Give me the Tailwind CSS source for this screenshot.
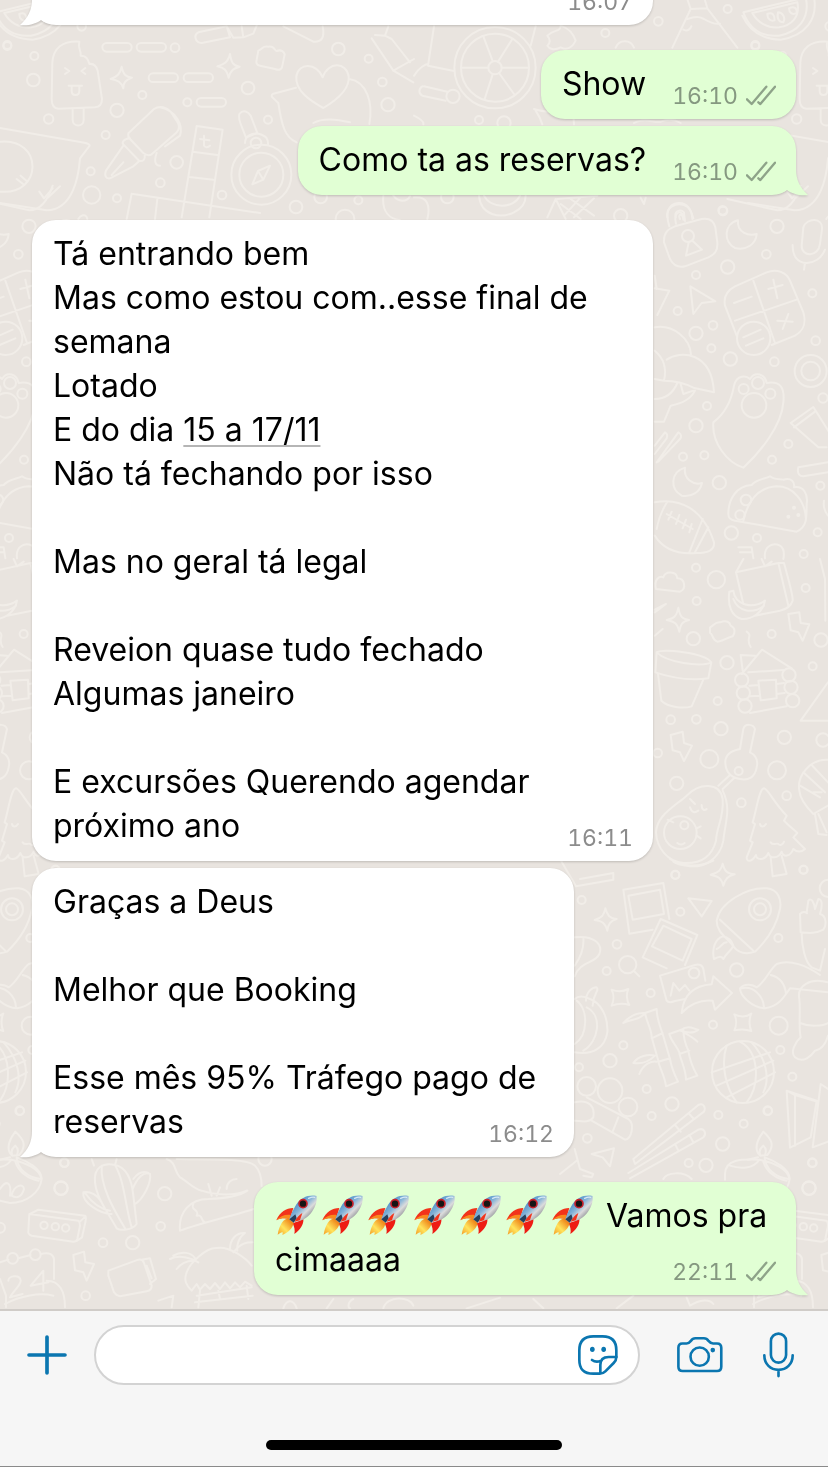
<!DOCTYPE html>
<html lang="pt-BR">
  <head>
    <meta charset="UTF-8" />
    <meta name="viewport" content="width=device-width, initial-scale=1.0" />
    <script src="https://cdn.jsdelivr.net/npm/@tailwindcss/browser@4"></script>
    <title>Conversa</title>
  </head>
  <body
    class="flex h-screen flex-col bg-[#e9e4df] font-['Inter','Liberation_Sans',sans-serif] text-black"
  >
    <!-- shared shapes -->
    <svg class="absolute size-0" aria-hidden="true">
      <defs>
        <linearGradient id="hull" x1="0" y1="0" x2="1" y2="1">
          <stop offset="0.2" stop-color="#3f86c4" />
          <stop offset="0.45" stop-color="#86b4d8" />
          <stop offset="0.6" stop-color="#dcdcdc" />
          <stop offset="0.85" stop-color="#6c7076" />
        </linearGradient>
        <linearGradient id="flame" x1="1" y1="0" x2="0" y2="1">
          <stop offset="0.2" stop-color="#f08a1c" />
          <stop offset="0.6" stop-color="#ffe45c" />
          <stop offset="1" stop-color="#f59a23" />
        </linearGradient>
      </defs>
      <symbol id="rocket" viewBox="75 69 138 132">
        <path d="M130 111C108 112 90 122 79 148C92 141 104 141 120 144Z" fill="#f2331b" />
        <path d="M79 148C92 141 104 141 120 144L122 132C104 130 90 136 79 148Z" fill="#f98a1e" />
        <path d="M128 156L160 144C162 160 150 178 133 189C136 178 133 168 128 156Z" fill="#ee1c14" />
        <path d="M118 142C100 142 88 162 83 191C90 187 94 183 98 184C98 188 98 190 97 192C115 184 128 172 131 155Z" fill="url(#flame)" />
        <path d="M200 75C176 70 152 80 138 102C128 118 122 132 118 145L131 155C152 150 173 142 186 122C197 106 202 90 200 75Z" fill="url(#hull)" />
        <path d="M118 145L131 155L140 142L136 130Z" fill="#26405c" />
        <path d="M134 152C140 140 146 133 157 126L150 148Z" fill="#f2331b" />
        <circle cx="159" cy="98" r="12" fill="#151515" stroke="#c8202a" stroke-width="5" />
        <path d="M176 82C182 79 188 77 194 79" fill="none" stroke="#d6e8f6" stroke-width="4" stroke-linecap="round" />
      </symbol>
      <symbol id="ticks" viewBox="0 0 90 66">
        <path d="M3 43L17 57L61 5M37 52L43 57L87 5" fill="none" stroke="#8ea389" stroke-width="7" stroke-linecap="round" stroke-linejoin="round" />
      </symbol>
      <symbol id="tail" viewBox="0 0 36 27">
        <path d="M12 0C12 11 8 19 0 26C8 27 16 25 21 21C25 24 30 25 36 25V0Z" fill="currentColor" />
      </symbol>
    </svg>

    <main class="relative flex min-h-0 flex-1 flex-col justify-end overflow-hidden px-8 pb-3.5">
      <!-- wallpaper doodles, one tile repeated sideways -->
      <svg
        class="absolute inset-0 h-full w-full"
        viewBox="0 0 2484 3930"
        preserveAspectRatio="xMidYMax slice"
        fill="none"
        stroke="#f1ede8"
        stroke-width="6"
        stroke-linecap="round"
        stroke-linejoin="round"
        aria-hidden="true"
      >
        <g id="tile">
          <g>
            <!-- lolly -->
            <path d="M155 300L157 190C160 150 185 125 238 128C232 150 245 155 242 170C262 170 265 185 268 195C285 192 290 205 293 215L306 300C306 318 296 324 285 325L175 329C160 328 155 318 155 300ZM218 330V362C218 385 251 385 251 362V328M195 207L208 216L195 225M256 207L244 216L256 225M206 260H246M215 262V275C215 292 238 292 238 275V262" />
            <!-- speech with face -->
            <path d="M0 387L245 430C270 434 272 438 266 444L240 478C236 530 220 632 140 634L0 612M0 428C130 415 130 590 0 578M50 540L70 556M62 530L80 546M118 578L132 598L158 568M145 595L180 562" />
            <!-- dashes -->
            <rect x="307" y="132" width="88" height="26" rx="13" />
            <rect x="410" y="132" width="88" height="26" rx="13" />
            <rect x="446" y="223" width="88" height="26" rx="13" />
            <rect x="551" y="223" width="88" height="26" rx="13" />
            <rect x="590" y="297" width="88" height="26" rx="13" />
            <path d="M595 100L680 82L690 115L605 132C585 130 580 108 595 100ZM680 82L700 116L730 115L725 82M730 115L760 104L770 80" />
            <path d="M365 203C370 228 378 234 396 236C376 244 370 250 370 268C364 250 354 243 332 240C352 232 360 226 365 203ZM690 165C694 192 700 200 719 203C700 208 692 214 686 236C680 212 672 206 652 202C672 196 684 190 690 165Z" />
            <path d="M775 155C790 150 785 140 805 143C825 140 822 155 830 156C845 150 852 160 854 166L846 205C842 215 835 214 825 210L780 200C768 198 768 190 770 182Z" />
            <!-- tube of paint -->
            <path d="M385 403L462 330C480 318 500 325 512 338L534 372C540 385 536 395 528 402L455 466C445 472 435 466 430 462L390 420C384 414 384 408 385 403ZM390 418C370 420 365 430 370 436L418 486C430 488 436 480 434 470M370 440L318 515C312 530 318 540 330 538L400 502L418 486M335 528L370 490M480 325C530 335 550 380 540 410L495 442M470 462C460 490 468 500 480 500" />
            <!-- tetris bricks -->
            <path d="M590 381L668 392L628 655M590 381L545 655M578 458L652 468M568 534L640 542M395 584L380 660M395 584L780 642M472 600L465 660M612 410V440C615 446 625 446 630 440M600 420L628 424" />
            <!-- compass -->
            <path d="M718 345C730 330 745 338 752 350L772 402C752 410 742 414 738 416L722 375C716 360 716 355 718 345Z" />
            <path d="M735 432C735 410 755 402 775 404C800 410 805 420 804 438" />
            <circle cx="768" cy="432" r="16" />
            <circle cx="784" cy="527" r="90" />
            <circle cx="784" cy="527" r="66" />
            <path d="M810 500L790 542L757 556L774 516ZM774 516L790 542" />
            <!-- heart and speech -->
            <path d="M968 235C950 190 895 190 889 232C885 275 930 305 970 327C1015 300 1050 270 1046 232C1040 190 985 185 968 235ZM888 266L820 284C812 288 815 294 820 298L835 312C845 380 855 415 890 430M1048 240C1100 248 1120 310 1108 375M940 372C970 355 1010 360 1050 370" />
            <path d="M850 82L940 128C965 130 975 115 968 82M1115 118L1180 215L1240 250M1125 108L1155 110L1165 82M1180 215L1242 180M1155 110L1175 120L1230 190" />
            <circle cx="22" cy="141" r="12" /><circle cx="103" cy="171" r="12" /><circle cx="100" cy="243" r="19" />
            <circle cx="245" cy="82" r="13" /><circle cx="525" cy="146" r="13" /><circle cx="427" cy="288" r="12" />
            <circle cx="351" cy="334" r="20" /><circle cx="146" cy="360" r="14" /><circle cx="317" cy="408" r="12" />
            <circle cx="272" cy="517" r="12" /><circle cx="275" cy="588" r="26" /><circle cx="351" cy="598" r="12" />
            <circle cx="481" cy="551" r="13" /><circle cx="530" cy="490" r="19" /><circle cx="562" cy="310" r="12" />
            <circle cx="744" cy="267" r="19" /><circle cx="804" cy="362" r="12" /><circle cx="666" cy="588" r="13" />
            <circle cx="1015" cy="150" r="19" /><circle cx="1106" cy="179" r="12" /><circle cx="1147" cy="249" r="13" />
            <circle cx="1164" cy="317" r="20" /><circle cx="888" cy="624" r="19" /><circle cx="962" cy="594" r="19" />
            <circle cx="1075" cy="604" r="12" /><circle cx="1035" cy="660" r="28" />
            <path d="M1150 590C1145 640 1170 660 1200 664M1180 590C1195 610 1220 610 1230 592M262 660C258 640 240 650 235 660" />
          </g>

          <g transform="translate(1242 0)">
            <!-- wheel -->
            <circle cx="243" cy="206" r="122" />
            <circle cx="243" cy="206" r="102" />
            <circle cx="243" cy="206" r="20" />
            <path d="M223 206H142M263 206H343M236 186L208 112M252 188L295 120M236 226L212 300M255 222L300 285" />
            <path d="M60 82L42 200L120 216M0 230C15 205 35 195 42 195M25 262C12 270 15 285 25 290L95 305M30 262L100 278M365 82L350 140" />
            <circle cx="117" cy="292" r="20" />
            <path d="M400 110C420 90 440 100 440 80C470 90 480 110 485 125C470 155 450 150 440 145C420 155 405 150 400 140C412 130 408 120 400 110ZM605 146C615 120 650 120 660 146" />
            <!-- mountain flag -->
            <path d="M775 146L830 30L880 28L970 146M830 30L820 0M880 28L872 0M820 60C850 50 860 55 870 60C890 72 905 76 918 74M808 92C820 98 830 90 832 82" />
            <!-- watermelon -->
            <path d="M988 40L1175 -5C1190 60 1150 100 1095 110C1040 115 1005 85 988 40ZM1015 42L1150 10C1160 55 1130 80 1095 85C1060 88 1030 70 1015 42ZM1200 -5C1212 60 1175 110 1100 122C1040 120 1005 95 985 50" />
            <path d="M1060 45C1060 60 1070 68 1082 64C1082 48 1075 38 1060 45ZM1092 40C1088 60 1095 70 1108 70C1116 55 1105 40 1092 40ZM1125 28C1125 40 1135 50 1148 42C1150 28 1140 20 1125 28Z" />
            <!-- row under the green bubbles -->
            <path d="M195 590C200 650 260 660 300 640C330 625 335 605 335 590M210 590C230 630 300 630 318 590M400 655L425 600L455 660M430 600L550 590M440 615L500 660M470 600L540 650M500 595L450 650M540 598L480 655M680 596L690 615L695 596" />
            <path d="M760 655C755 625 785 610 810 618C830 625 835 640 835 660M785 655C780 635 800 630 810 640L812 660M0 350C20 360 30 370 28 376M360 330C400 345 420 330 478 345L480 376M365 335C375 350 380 360 385 376M660 372C690 355 720 372 740 368C760 360 780 360 800 372M0 595C40 590 50 620 40 660" />
            <path d="M940 600L1090 634C1130 634 1150 590 1160 560" />
            <circle cx="733" cy="67" r="13" /><circle cx="941" cy="30" r="12" /><circle cx="574" cy="102" r="12" />
            <circle cx="195" cy="363" r="12" /><circle cx="100" cy="594" r="19" /><circle cx="620" cy="650" r="20" />
            <circle cx="927" cy="636" r="13" /><circle cx="1024" cy="138" r="12" /><circle cx="270" cy="372" r="20" />
          </g>

          <g transform="translate(1920 600)">
            <!-- padlock -->
            <path d="M72 130C70 100 85 90 105 82L185 60C210 56 222 68 226 85L232 130C234 155 225 165 205 175L135 202C110 208 98 195 90 180ZM88 82C75 40 85 15 115 12C145 10 152 35 160 58M108 74C98 35 130 25 135 66M120 60C112 45 128 40 130 62" />
            <circle cx="144" cy="111" r="18" />
            <path d="M146 130L138 170L186 152L158 126" />
            <!-- moon -->
            <path d="M294 64C250 75 250 130 285 147C320 155 348 135 350 105C325 112 290 100 294 64Z" />
            <!-- mic -->
            <path d="M485 140L490 85C500 55 550 55 546 90L540 135C535 175 485 175 485 140ZM458 138C455 210 535 205 555 152M495 192L492 212" />
            <!-- calculator -->
            <path d="M255 320C250 295 260 275 285 262L380 220C410 208 440 220 450 245L490 340C500 375 490 395 465 410L395 438M255 320L290 410M340 245L405 432M285 365L470 302M282 312L335 293M385 270L428 258M400 242L412 298M412 365L458 368M445 345L428 390M310 415L362 392M318 440L370 418" />
            <circle cx="341" cy="418" r="50" />
            <path d="M151 262L160 345L185 312L226 307ZM44 268L88 275L52 348M44 230L50 270" />
            <!-- umbrella -->
            <path d="M44 385C100 375 150 420 153 466M44 455C75 480 80 510 72 545L44 540M80 482C120 455 215 455 222 580L160 566C130 550 100 545 72 545M44 600C80 600 100 580 112 552M44 668L72 668L92 620C120 615 150 605 165 575M122 556L130 585L160 575" />
            <!-- paw badge -->
            <path d="M220 670C260 640 275 600 282 560C290 525 320 530 330 540C345 515 375 525 380 552C420 545 435 565 430 610C425 680 360 760 310 806C260 790 215 730 220 670Z" />
            <circle cx="342" cy="619" r="37" /><circle cx="311" cy="570" r="15" /><circle cx="354" cy="552" r="18" /><circle cx="391" cy="584" r="15" />
            <circle cx="512" cy="516" r="48" /><circle cx="512" cy="516" r="28" />
            <path d="M452 672L520 624L580 720M452 672L535 745L560 745M462 685L525 638M475 805L564 790M475 805C470 825 480 832 490 832L564 820" />
            <path d="M44 740L75 700C85 705 82 712 80 718L44 765M50 790L115 700C125 705 125 715 120 720L55 788" />
            <!-- moon -->
            <path d="M135 806C90 820 90 870 125 890C155 895 180 880 186 852C160 860 130 840 135 806Z" />
            <!-- rugby ball -->
            <path d="M44 910C120 895 190 930 222 1030C225 1055 200 1062 170 1062C110 1068 70 1050 44 1010M82 908C65 935 55 960 50 990M188 960L148 1060M205 985L165 1060M80 945L158 990M95 938L85 962M118 948L108 975M138 962L128 988M155 975L148 1000" />
            <!-- taco -->
            <path d="M265 945C265 900 290 860 335 858C350 840 375 840 390 832C405 845 420 838 430 842C455 835 465 850 462 865C490 860 505 885 500 915C500 960 500 985 470 998L285 965C268 962 265 955 265 945ZM310 965C325 900 360 865 410 862C460 862 495 905 498 960" />
            <circle cx="300" cy="948" r="14" /><circle cx="445" cy="953" r="3" /><circle cx="462" cy="926" r="3" /><circle cx="475" cy="948" r="3" /><circle cx="318" cy="903" r="16" />
            <path d="M295 1045L335 1045L340 1078M300 1060H335M375 1078C370 1040 400 1030 420 1040C435 1050 432 1070 430 1080M552 905C548 930 560 945 564 950" />
            <circle cx="248" cy="34" r="13" /><circle cx="411" cy="82" r="20" /><circle cx="379" cy="166" r="13" /><circle cx="263" cy="204" r="20" />
            <circle cx="168" cy="228" r="12" /><circle cx="113" cy="336" r="12" /><circle cx="168" cy="403" r="20" /><circle cx="219" cy="379" r="13" />
            <circle cx="214" cy="448" r="12" /><circle cx="271" cy="480" r="20" /><circle cx="403" cy="488" r="13" /><circle cx="517" cy="283" r="12" />
            <circle cx="527" cy="425" r="13" /><circle cx="201" cy="621" r="12" /><circle cx="168" cy="680" r="20" /><circle cx="129" cy="773" r="12" />
            <circle cx="193" cy="769" r="12" /><circle cx="396" cy="782" r="12" /><circle cx="445" cy="735" r="12" /><circle cx="238" cy="851" r="20" />
            <circle cx="274" cy="1002" r="20" /><circle cx="351" cy="1017" r="12" /><circle cx="533" cy="1000" r="12" /><circle cx="541" cy="860" r="12" />
            <circle cx="491" cy="1065" r="12" /><circle cx="549" cy="597" r="14" />
          </g>

          <g transform="translate(1920 1680)">
            <path d="M48 90C40 60 60 50 70 55C75 35 110 35 112 58C135 58 140 90 120 98ZM44 152L78 135L44 160M44 230L68 210" />
            <path d="M115 146C120 175 128 180 147 183C126 188 122 195 118 218C112 192 104 188 80 183C102 178 110 172 115 146Z" />
            <path d="M210 205C222 200 225 188 240 190C260 182 270 190 272 200C288 208 285 222 278 232C262 235 245 248 232 248C215 242 220 225 210 222Z" />
            <!-- fridge with banana -->
            <path d="M288 40L310 0M288 40L415 12L432 12C445 60 460 110 458 125C450 150 430 152 420 155L345 170M288 40L310 135M415 12L445 140M365 0L375 22L395 8M268 98L280 95C285 140 340 150 375 125C370 160 335 182 305 180C275 172 262 140 268 98ZM280 120C295 160 340 165 372 140" />
            <path d="M445 165L478 160L482 192L508 196L488 245L475 220L452 214ZM92 528L128 518L132 552L156 560L132 606L120 580L98 574Z" />
            <!-- flower pot -->
            <path d="M50 280C70 270 190 280 214 310C180 325 80 310 50 280ZM50 280L46 340C90 355 150 365 205 358L214 310M54 345L64 425C85 445 130 450 155 442L190 362" />
            <!-- log cabin -->
            <path d="M305 345L366 272L455 328M345 290L302 288L308 335M320 218C340 230 315 240 332 264M325 340L430 333M328 380L355 378M410 375L432 372M330 412L358 410M410 405L434 402M330 462L440 442M355 365L408 362L410 418L362 424Z" />
            <circle cx="305" cy="363" r="20" /><circle cx="310" cy="402" r="20" /><circle cx="315" cy="441" r="20" />
            <circle cx="447" cy="348" r="20" /><circle cx="453" cy="385" r="20" /><circle cx="458" cy="425" r="20" />
            <path d="M564 370L482 485H564M540 0L555 60L556 185" />
            <!-- key -->
            <path d="M300 570L310 510C315 492 340 495 345 510L330 580C350 590 355 605 350 625C345 655 325 665 300 660C270 655 255 635 256 605C260 580 280 575 300 570ZM285 655L248 690M270 648L235 680" />
            <circle cx="296" cy="636" r="12" />
            <!-- avocado -->
            <path d="M48 820C50 770 100 745 140 710C180 670 240 670 248 720C252 780 230 800 228 845C215 895 180 915 130 912C85 908 50 870 48 820ZM248 695C275 750 255 790 250 845C240 900 190 930 140 920C120 918 110 915 100 908M150 720L165 735M150 745C155 762 165 762 175 755M185 738C185 755 195 755 200 750" />
            <circle cx="121" cy="821" r="49" /><circle cx="133" cy="799" r="12" />
            <path d="M112 852C118 858 128 858 134 852M83 782L100 790M170 808L182 802M170 830L182 838" />
            <!-- pine tree -->
            <path d="M372 688C385 690 400 730 440 770L432 785C445 800 460 810 472 822L460 835L495 870C485 880 470 880 460 870C450 895 430 895 425 878C415 900 390 900 385 882C375 905 350 905 348 888C335 910 320 910 320 895L338 850L330 845L345 795L338 790C350 750 358 688 372 688ZM392 895L398 952L440 945L425 890M360 795C362 805 372 805 378 795M392 850C400 862 410 850 415 855C420 862 430 855 432 848" />
            <!-- croissant -->
            <path d="M564 602C510 600 470 650 478 695C480 720 500 745 520 765L564 740M480 680L540 715M490 640L555 700M515 618L564 670M525 765L535 825L560 828M535 765L560 820M520 700L545 700" />
            <path d="M248 914C254 938 262 944 284 946C262 952 256 960 250 980C244 958 236 952 212 947C236 940 244 934 248 914Z" />
            <circle cx="168" cy="26" r="12" /><circle cx="229" cy="62" r="26" /><circle cx="170" cy="126" r="12" /><circle cx="497" cy="87" r="12" />
            <circle cx="160" cy="239" r="20" /><circle cx="395" cy="225" r="12" /><circle cx="543" cy="243" r="20" /><circle cx="261" cy="311" r="20" />
            <circle cx="518" cy="322" r="12" /><circle cx="233" cy="426" r="12" /><circle cx="92" cy="482" r="13" /><circle cx="169" cy="481" r="13" />
            <circle cx="243" cy="509" r="20" /><circle cx="433" cy="535" r="20" /><circle cx="549" cy="543" r="20" /><circle cx="208" cy="600" r="27" />
            <circle cx="411" cy="634" r="27" /><circle cx="53" cy="582" r="13" /><circle cx="110" cy="673" r="20" /><circle cx="304" cy="731" r="13" />
            <circle cx="440" cy="710" r="13" /><circle cx="106" cy="947" r="12" /><circle cx="490" cy="932" r="12" /><circle cx="565" cy="988" r="26" />
          </g>

          <g transform="translate(1680 2580)">
            <path d="M0 0L48 82L160 62V42L60 60M330 0C370 25 420 25 460 5M136 148C142 170 150 178 170 180C150 186 145 195 142 215C136 194 128 186 104 183C126 176 132 168 136 148Z" />
            <!-- photos -->
            <path d="M190 92L310 72L328 180M190 92L208 224L278 212M205 110L300 92L312 165L218 182ZM302 180L412 228L375 318M302 180L248 295L320 328M310 200L395 240L368 305L276 262ZM385 118L455 126L425 172Z" />
            <path d="M300 350L405 318C420 314 428 320 430 330L436 365M300 350L320 425C325 432 335 430 345 426L375 420M332 410L340 372L358 395L375 378L388 395" />
            <circle cx="402" cy="342" r="16" />
            <path d="M365 462C370 410 400 380 455 376L460 352L516 402L465 452L458 425C420 420 385 440 365 462Z" />
            <!-- magnifier -->
            <circle cx="203" cy="317" r="26" /><path d="M222 336L238 352" />
            <path d="M44 235C100 228 130 255 118 285C105 315 60 305 44 352M44 320C65 290 72 260 70 238M155 392C170 398 190 398 205 390C198 405 200 425 208 438C190 432 170 434 155 440C162 425 162 405 155 392ZM523 466C540 474 560 474 574 464C566 480 568 505 574 516C558 510 540 510 523 514C530 500 530 480 523 466Z" />
            <!-- pumpkin -->
            <path d="M44 420C60 405 80 415 90 420C120 430 145 470 142 520C135 565 100 590 44 580M78 425C78 400 95 385 110 385C120 395 100 400 98 440M50 425C85 450 85 530 44 555M80 445C130 470 115 550 70 575" />
            <!-- bamboo -->
            <path d="M255 462L290 450C290 480 300 500 308 525L330 600C335 630 345 650 354 668L318 682C315 650 295 620 295 605L275 535C275 510 260 490 255 462ZM275 538L308 522M295 608L330 598M190 492C210 470 230 460 255 462C240 485 210 480 190 492ZM328 525L370 510C370 540 378 560 385 575C390 610 400 630 412 650L378 662C378 630 360 600 358 580C350 560 335 550 328 525ZM358 585L388 575M360 515C385 495 400 510 415 512C400 525 375 520 360 515ZM370 520C390 530 400 535 412 548M220 612C235 590 265 585 285 590C265 610 240 615 220 612ZM238 645C250 615 275 605 290 608" />
            <!-- rocket -->
            <path d="M470 185C480 130 560 85 620 88C655 92 665 120 660 150C650 200 620 245 585 278C550 290 530 275 520 262C500 235 470 220 470 185ZM480 182L580 275M462 300C455 270 465 240 488 232C505 235 515 245 520 260C515 275 500 280 490 300C485 290 478 292 462 300ZM470 270C485 265 485 250 500 250" />
            <circle cx="600" cy="151" r="33" /><circle cx="600" cy="151" r="18" />
            <!-- arms and sock -->
            <path d="M722 220L720 165C735 150 745 170 740 160L745 125C755 115 762 130 765 150L775 120C790 120 785 150 780 165C800 170 800 200 790 212C765 225 745 222 722 220ZM725 222C725 260 735 310 755 325L780 335L795 270M540 388C555 370 580 378 590 385C615 370 630 330 650 315C690 300 740 320 780 348M540 388C540 410 575 445 615 448C660 440 670 415 690 388L804 400M632 348C660 355 675 375 678 405M545 388C580 380 610 410 612 445" />
            <path d="M804 370C750 355 710 380 718 420C722 460 715 500 722 535C705 550 690 580 705 595C730 615 755 590 765 575C790 570 800 545 804 530M720 492C750 505 790 500 804 492" />
            <!-- globe -->
            <circle cx="549" cy="639" r="93" />
            <path d="M455 640L630 580M470 680L640 605M500 715L645 640M500 560C480 620 500 690 530 730M540 548C600 580 600 680 560 730M575 550C620 600 630 660 610 700" />
            <!-- chopsticks -->
            <path d="M220 900L415 738C430 730 438 745 432 758L225 915ZM345 798L362 818M388 765L402 780M205 942L415 812C435 805 440 825 430 835L210 958M345 855L355 875M388 828L400 850" />
            <!-- sushi and cards -->
            <circle cx="80" cy="682" r="28" /><circle cx="150" cy="695" r="37" /><circle cx="204" cy="744" r="28" />
            <path d="M44 730C90 720 105 745 100 775C85 795 60 785 44 785M80 715L205 780C225 795 215 840 195 842L95 785M175 775L158 818M95 885L162 868L150 922L128 895ZM44 870L60 930L100 945L95 955L70 950M0 945L50 905" />
            <path d="M680 695L770 725L752 835L690 866L680 695L705 708V860M804 690L782 675L758 865L804 848M705 708L765 726" />
            <!-- candle bowl -->
            <path d="M610 818C590 845 580 870 600 890L622 888C645 860 635 840 610 818ZM600 885C595 870 605 865 610 860C620 868 618 880 615 888M495 945C495 900 545 900 598 902C640 910 685 930 688 960M610 908C620 940 650 960 680 965M510 920C540 930 580 930 598 902M495 945V962M310 960C320 940 370 935 395 960" />
            <circle cx="65" cy="123" r="12" /><circle cx="346" cy="48" r="12" /><circle cx="361" cy="158" r="12" /><circle cx="171" cy="256" r="13" />
            <circle cx="140" cy="336" r="12" /><circle cx="272" cy="402" r="12" /><circle cx="655" cy="237" r="12" /><circle cx="530" cy="333" r="20" />
            <circle cx="459" cy="497" r="12" /><circle cx="656" cy="500" r="27" /><circle cx="190" cy="559" r="12" /><circle cx="150" cy="605" r="20" />
            <circle cx="57" cy="625" r="12" /><circle cx="661" cy="573" r="12" /><circle cx="697" cy="653" r="12" /><circle cx="260" cy="690" r="12" />
            <circle cx="336" cy="735" r="20" /><circle cx="275" cy="771" r="12" /><circle cx="475" cy="768" r="12" /><circle cx="551" cy="794" r="12" />
            <circle cx="624" cy="755" r="12" /><circle cx="488" cy="855" r="20" /><circle cx="82" cy="838" r="13" /><circle cx="386" cy="912" r="12" />
            <circle cx="438" cy="919" r="20" /><circle cx="757" cy="911" r="12" /><circle cx="747" cy="988" r="20" /><circle cx="731" cy="32" r="12" />
          </g>

          <g transform="translate(0 3300)">
            <path d="M0 182L30 175M50 175C80 185 125 210 125 240C120 280 80 312 30 312L0 305M50 178C55 210 80 235 122 240M0 270C20 240 35 250 30 290M35 290C40 260 70 250 72 270C65 295 50 300 35 290" />
            <!-- cactus -->
            <path d="M285 250C280 205 310 190 345 198C380 205 395 240 400 290L410 375C395 395 360 395 350 388C330 350 290 300 285 250ZM305 200C300 260 340 330 375 388M345 198C375 250 375 320 395 385M335 345C300 345 245 310 250 280C270 275 295 290 305 310M255 282C275 310 300 330 330 335M398 270C410 240 430 215 450 225C455 250 430 300 405 315M400 240C415 220 430 215 445 222M275 180L282 200M350 180L345 198" />
            <!-- box with dots -->
            <path d="M88 345L235 365C240 370 240 375 240 380L232 420C230 428 225 428 220 428L95 410C86 408 84 400 85 395ZM90 345L115 332L255 350C260 352 258 360 256 370L246 415L230 426M240 368L256 352" />
            <circle cx="132" cy="379" r="11" /><circle cx="166" cy="383" r="11" /><circle cx="197" cy="387" r="11" />
            <!-- calendar -->
            <path d="M0 490L25 482M55 478L92 468M122 465C150 458 160 468 162 480V540M25 545C25 530 60 525 62 545C62 560 40 575 30 595L68 585M130 575V515L92 560L145 550M0 540L18 590V625M140 545C180 545 195 580 195 625M15 615C60 590 120 580 160 590" />
            <circle cx="38" cy="478" r="16" /><circle cx="106" cy="467" r="16" />
            <path d="M220 468L252 458L256 490L282 495L260 545L250 520L225 514Z" />
            <path d="M325 515L415 482C425 480 430 486 432 492L455 560C455 570 450 575 440 577L360 592C350 590 345 585 342 580L325 530ZM425 482L450 478L468 540L450 555M440 500L455 538" />
            <!-- fox -->
            <path d="M500 180C530 190 520 215 540 235C560 245 580 270 605 275C650 290 710 290 740 275M530 180C600 182 740 175 765 200C780 215 785 240 785 262M540 395C535 340 570 300 625 300C690 298 720 290 742 275M540 395C610 370 720 345 760 330M580 315C570 335 600 330 590 350C610 345 600 365 615 370M625 255L635 290M660 265L650 290M680 270C680 250 695 240 710 240" />
            <!-- hut -->
            <path d="M560 520C570 490 620 445 650 447C690 440 740 480 755 500M560 520C550 545 560 560 575 575L590 555L600 572L615 555L630 570L645 552L660 570L675 550L690 568L705 550L720 565L735 548L755 560M510 480C540 465 580 480 595 490M520 470C545 455 575 460 585 478M530 510C545 490 560 485 580 485M690 450C690 420 710 400 735 402C715 415 710 440 712 455M700 460C725 430 740 430 758 430M590 590L755 565M585 610L758 590M600 575L595 625M655 575L660 600M740 560L745 600M475 605L520 590L515 625" />
            <circle cx="59" cy="35" r="13" /><circle cx="193" cy="191" r="13" /><circle cx="183" cy="267" r="20" /><circle cx="494" cy="284" r="20" />
            <circle cx="482" cy="382" r="13" /><circle cx="309" cy="431" r="13" /><circle cx="398" cy="431" r="20" /><circle cx="257" cy="590" r="13" />
            <circle cx="0" cy="386" r="15" /><circle cx="795" cy="180" r="20" />
            <path d="M850 628C860 600 880 600 890 628M980 628L1000 600M1060 600C1040 610 1045 628 1050 628M1150 628C1160 590 1230 590 1240 620M1400 628L1500 596M1600 600L1630 628M1850 628L1900 590M2060 596L2070 620C2100 600 2130 600 2140 615" />
          </g>
        </g>
        <use href="#tile" x="2244" />
        <use href="#tile" x="-2244" />
      </svg>

      <!-- received -->
      <div class="relative mb-6.25 grid w-[621px] self-start rounded-3xl bg-white pt-3 pr-5 pb-[9px] pl-[21px] drop-shadow-[0_1px_1px_rgba(0,0,0,0.18)]">
        <svg class="absolute -bottom-px -left-3 h-[27px] w-9 text-white" aria-hidden="true"><use href="#tail" /></svg>
        <p class="col-start-1 row-start-1 pb-1 text-[32px] leading-[44px]">&nbsp;</p>
        <time class="col-start-1 row-start-1 self-end justify-self-end text-[23px] leading-7 text-[#8c8c8c] tabular-nums">16:07</time>
      </div>

      <!-- sent -->
      <div class="relative mb-1.75 flex items-end gap-[26px] self-end rounded-3xl bg-[#e1ffd4] pt-3 pr-5 pb-[9px] pl-[21px] drop-shadow-[0_1px_1px_rgba(0,0,0,0.18)]">
        <p class="pb-1 text-[32px] leading-[44px]">Show</p>
        <div class="flex items-center gap-2 text-[#859880]">
          <time class="text-[23px] leading-7 tabular-nums">16:10</time>
          <svg class="h-[22px] w-[30px]" role="img" aria-label="Entregue"><use href="#ticks" /></svg>
        </div>
      </div>
      <div class="relative mb-6.25 flex items-end gap-[26px] self-end rounded-3xl bg-[#e1ffd4] pt-3 pr-5 pb-[9px] pl-[21px] drop-shadow-[0_1px_1px_rgba(0,0,0,0.18)]">
        <svg class="absolute -right-3 -bottom-px h-[27px] w-9 -scale-x-100 text-[#e1ffd4]" aria-hidden="true"><use href="#tail" /></svg>
        <p class="pb-1 text-[32px] leading-[44px]">Como ta as reservas?</p>
        <div class="flex items-center gap-2 text-[#859880]">
          <time class="text-[23px] leading-7 tabular-nums">16:10</time>
          <svg class="h-[22px] w-[30px]" role="img" aria-label="Entregue"><use href="#ticks" /></svg>
        </div>
      </div>

      <!-- received -->
      <div class="relative mb-1.75 grid w-[621px] self-start rounded-3xl bg-white pt-3 pr-5 pb-[9px] pl-[21px] drop-shadow-[0_1px_1px_rgba(0,0,0,0.18)]">
        <p class="col-start-1 row-start-1 pb-1 text-[32px] leading-[44px]">
          Tá entrando bem<br />
          Mas como estou com..esse final de<br />
          semana<br />
          Lotado<br />
          E do dia
          <a href="#" class="underline decoration-[#b5b5b5] decoration-2 underline-offset-4">15 a 17/11</a><br />
          Não tá fechando por isso<br />
          <br />
          Mas no geral tá legal<br />
          <br />
          Reveion quase tudo fechado<br />
          Algumas janeiro<br />
          <br />
          E excursões Querendo agendar<br />
          próximo ano
        </p>
        <time class="col-start-1 row-start-1 self-end justify-self-end text-[23px] leading-7 text-[#8c8c8c] tabular-nums">16:11</time>
      </div>
      <div class="relative mb-6.25 grid w-[542px] self-start rounded-3xl bg-white pt-3 pr-5 pb-[9px] pl-[21px] drop-shadow-[0_1px_1px_rgba(0,0,0,0.18)]">
        <svg class="absolute -bottom-px -left-3 h-[27px] w-9 text-white" aria-hidden="true"><use href="#tail" /></svg>
        <p class="col-start-1 row-start-1 pb-1 text-[32px] leading-[44px]">
          Graças a Deus<br />
          <br />
          Melhor que Booking<br />
          <br />
          Esse mês 95% Tráfego pago de<br />
          reservas
        </p>
        <time class="col-start-1 row-start-1 self-end justify-self-end text-[23px] leading-7 text-[#8c8c8c] tabular-nums">16:12</time>
      </div>

      <!-- sent -->
      <div class="relative grid w-[542px] self-end rounded-3xl bg-[#e1ffd4] pt-3 pr-5 pb-[9px] pl-[21px] drop-shadow-[0_1px_1px_rgba(0,0,0,0.18)]">
        <svg class="absolute -right-3 -bottom-px h-[27px] w-9 -scale-x-100 text-[#e1ffd4]" aria-hidden="true"><use href="#tail" /></svg>
        <p class="col-start-1 row-start-1 pb-1 text-[32px] leading-[44px]">
          <span class="inline-flex align-top" role="img" aria-label="Sete foguetes">
            <svg class="h-11 w-[46px]"><use href="#rocket" /></svg>
            <svg class="h-11 w-[46px]"><use href="#rocket" /></svg>
            <svg class="h-11 w-[46px]"><use href="#rocket" /></svg>
            <svg class="h-11 w-[46px]"><use href="#rocket" /></svg>
            <svg class="h-11 w-[46px]"><use href="#rocket" /></svg>
            <svg class="h-11 w-[46px]"><use href="#rocket" /></svg>
            <svg class="h-11 w-[46px]"><use href="#rocket" /></svg>
          </span>
          Vamos pra<br />
          cimaaaa
        </p>
        <div class="col-start-1 row-start-1 flex items-center gap-2 self-end justify-self-end text-[#859880]">
          <time class="text-[23px] leading-7 tabular-nums">22:11</time>
          <svg class="h-[22px] w-[30px]" role="img" aria-label="Entregue"><use href="#ticks" /></svg>
        </div>
      </div>
    </main>

    <footer class="border-t-2 border-b border-t-[#d0ccc8] border-b-[#8a8a8a] bg-[#f6f6f6] pt-3.5 pb-4">
      <form class="flex items-center pr-[34px] pl-[27px] text-[#0b76b0]">
        <button type="button" aria-label="Anexar" class="shrink-0">
          <svg class="size-10" viewBox="81 103 120 120" fill="none" stroke="currentColor" stroke-width="11" stroke-linecap="round">
            <path d="M141 109V217M87 163H195" />
          </svg>
        </button>
        <div class="ml-[27px] flex h-15 min-w-0 flex-1 items-center rounded-full border-2 border-[#d3d3d3] bg-white pr-5 pl-6">
          <input type="text" aria-label="Mensagem" class="w-0 flex-1 bg-transparent text-[32px] text-black outline-none" />
          <button type="button" aria-label="Figurinhas" class="shrink-0">
            <svg class="size-10" viewBox="54 58 120 120" fill="none" stroke="currentColor" stroke-width="8" stroke-linecap="round" stroke-linejoin="round">
              <path d="M119 174H100C70 174 58 160 58 132V104C58 76 72 62 100 62H128C156 62 169 76 169 104V124C169 132 166 137 161 142L136 167C131 172 126 174 119 174Z" />
              <path d="M169 124H146C128 124 121 132 121 148V172M96 133C103 138 112 139 121 136" />
              <ellipse cx="97" cy="101" rx="7" ry="8" fill="currentColor" stroke="none" />
              <ellipse cx="131" cy="101" rx="7" ry="8" fill="currentColor" stroke="none" />
            </svg>
          </button>
        </div>
        <button type="button" aria-label="Câmera" class="ml-[37px] shrink-0">
          <svg class="h-9 w-[46px]" viewBox="351 64 140 110" fill="none" stroke="currentColor" stroke-width="8" stroke-linejoin="round">
            <path d="M367 84H380C387 84 389 81 393 76C397 70 400 68 407 68H433C440 68 443 70 447 76C451 81 454 84 461 84H473C482 84 486 88 486 97V155C486 164 482 168 473 168H368C359 168 355 164 355 155V97C355 88 359 84 367 84Z" />
            <circle cx="420" cy="124" r="28" />
            <circle cx="460" cy="104" r="7" fill="currentColor" stroke="none" />
          </svg>
        </button>
        <button type="button" aria-label="Gravar áudio" class="ml-10 shrink-0">
          <svg class="h-[46px] w-[31px]" viewBox="607 46 94 138" fill="none" stroke="currentColor" stroke-width="8" stroke-linecap="round">
            <rect x="631" y="50" width="46" height="88" rx="23" />
            <path d="M611 116C611 143 630 160 654 160C678 160 697 143 697 116M654 160V179" />
          </svg>
        </button>
      </form>
      <div class="mx-auto mt-[55px] h-2.5 w-[296px] rounded-full bg-black"></div>
    </footer>
  </body>
</html>
